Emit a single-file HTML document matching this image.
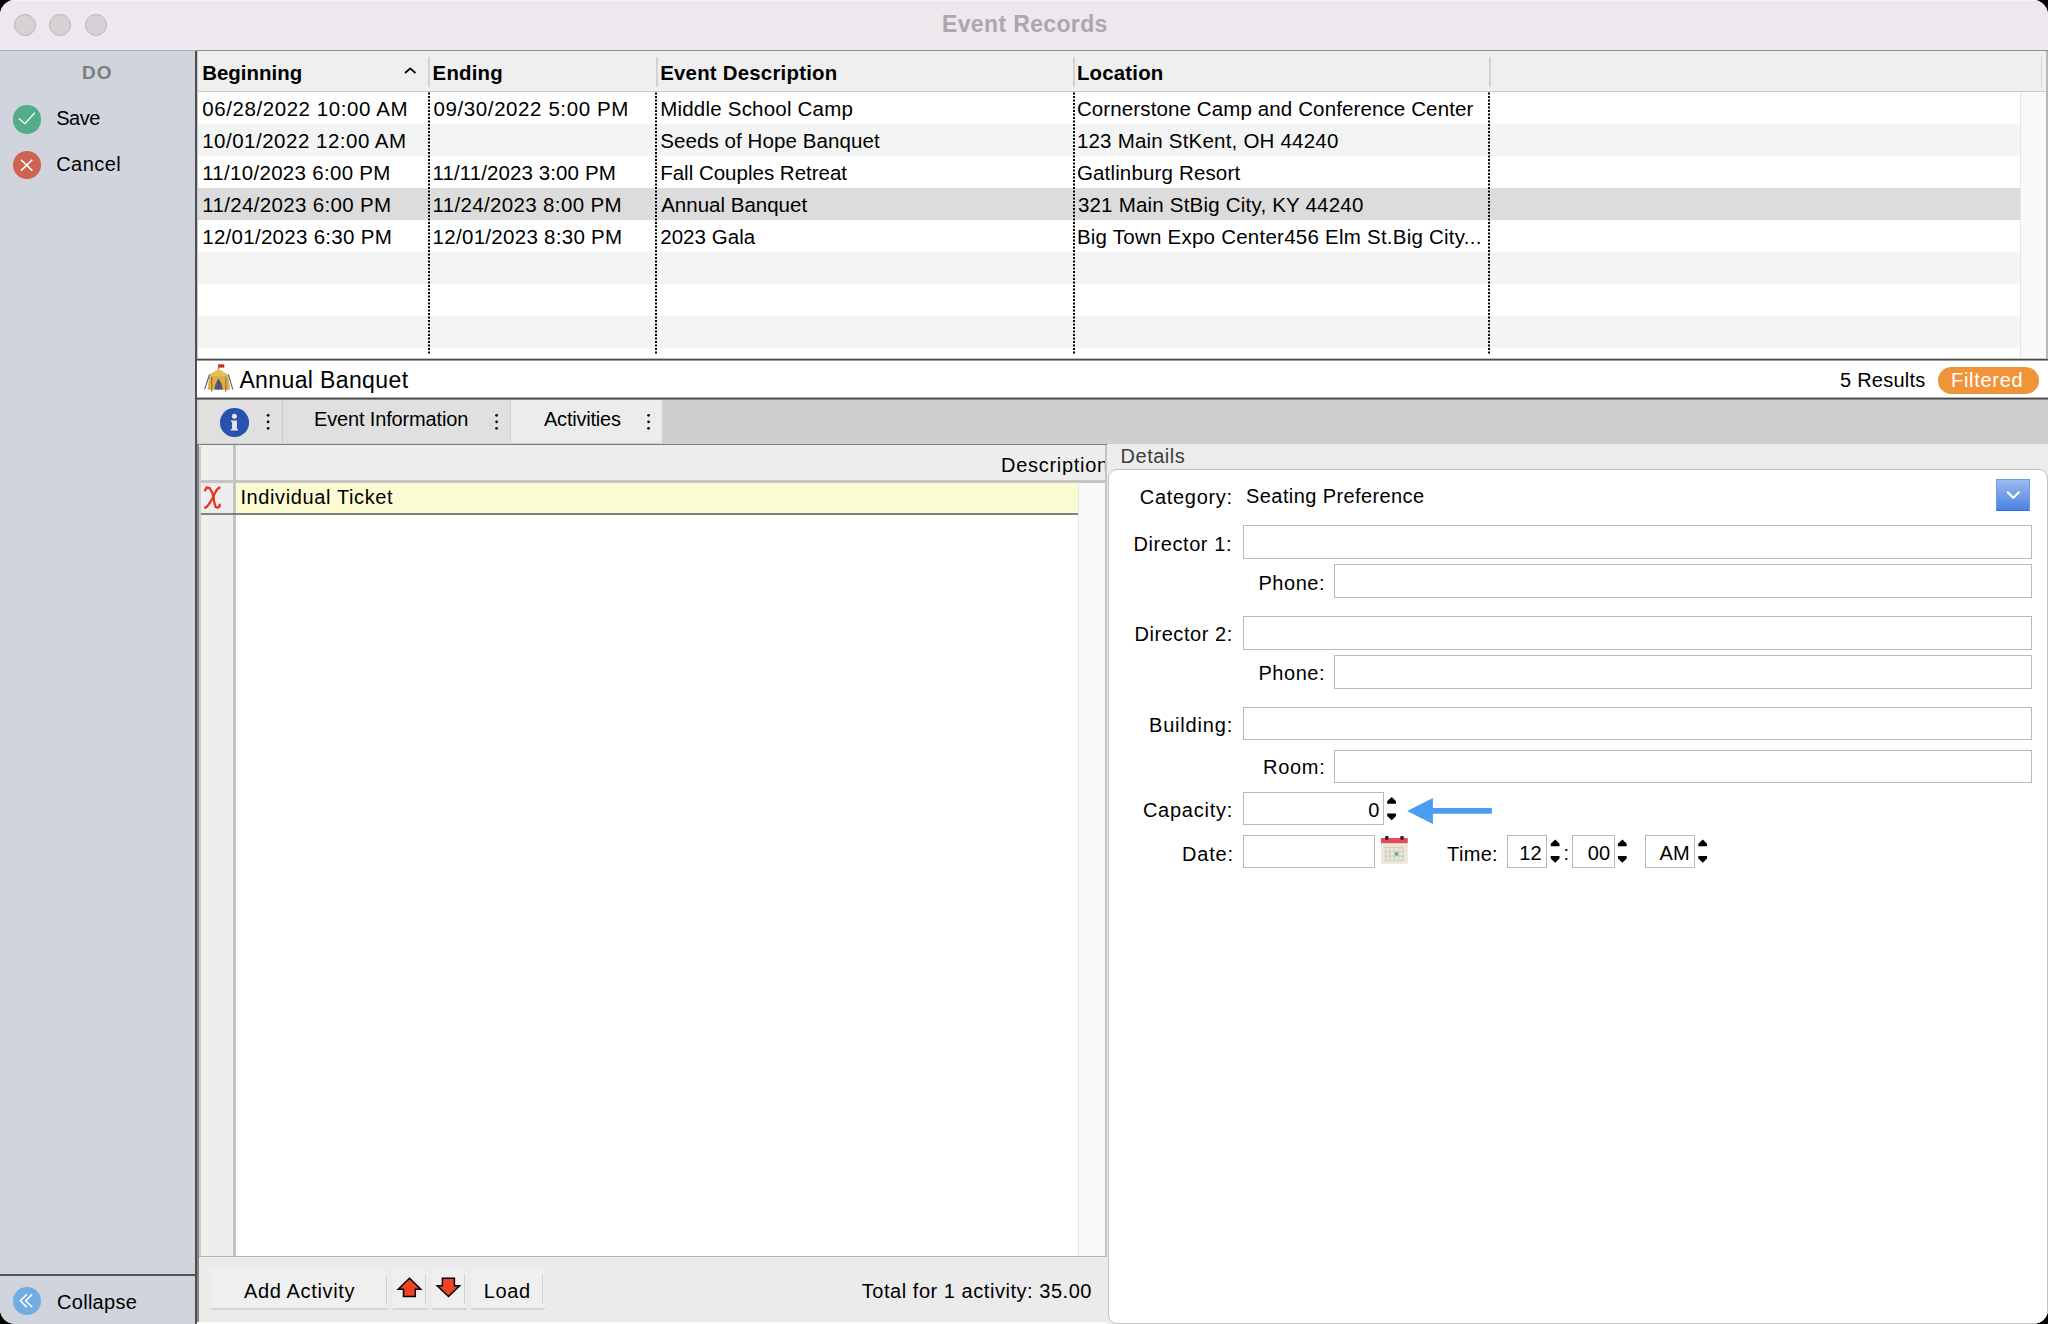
<!DOCTYPE html>
<html><head><meta charset="utf-8">
<style>
*{box-sizing:border-box;margin:0;padding:0}
html,body{width:2048px;height:1324px;overflow:hidden;background:#000}
body{font-family:"Liberation Sans",sans-serif;color:#000;-webkit-font-smoothing:antialiased}
#win{position:absolute;left:0;top:0;width:2048px;height:1324px;border-radius:15px;overflow:hidden;background:#fff}
.a{position:absolute}
.t{position:absolute;line-height:1;white-space:nowrap}
.tl{position:absolute;top:13.5px;width:22px;height:22px;border-radius:50%;background:#d5d1d5;border:1px solid #bab5ba}
.fld{position:absolute;background:#fff;border:1px solid #b9b9b9}

</style></head>
<body>
<div id="win">
<!-- title bar -->
<div class="a" style="left:0;top:0;width:2048px;height:50px;background:#ece8ed"></div>
<div class="a" style="left:0;top:0;width:2048px;height:1px;background:#f5f3f5"></div>
<div class="a" style="left:0;top:50px;width:196px;height:1px;background:#a9aeb7"></div>
<div class="a" style="left:196px;top:50px;width:1852px;height:1px;background:#8e8e8e"></div>
<div class="tl" style="left:14px"></div>
<div class="tl" style="left:49px"></div>
<div class="tl" style="left:85px"></div>
<!-- sidebar -->
<div class="a" style="left:0;top:51px;width:195px;height:1273px;background:#d0d4dd"></div>
<div class="a" style="left:195px;top:51px;width:2px;height:1273px;background:#4f4f4f"></div>
<div class="a" style="left:12.5px;top:105px;width:28.5px;height:28.5px;border-radius:50%;background:#56ab88"></div>
<div class="a" style="left:12.5px;top:150.7px;width:28.5px;height:28.5px;border-radius:50%;background:#cd6452"></div>
<div class="a" style="left:0;top:1274px;width:195px;height:2px;background:#555"></div>
<div class="a" style="left:12.5px;top:1286.5px;width:28.5px;height:28.5px;border-radius:50%;background:#70ade0"></div>
<!-- events table -->
<div class="a" style="left:197px;top:51px;width:1851px;height:309px;background:#fff"></div>
<div class="a" style="left:197px;top:51px;width:1px;height:308px;background:#c8c8c8"></div>
<div class="a" style="left:198px;top:51px;width:1848px;height:40px;background:#efefef"></div>
<div class="a" style="left:198px;top:91px;width:1848px;height:1px;background:#cccccc"></div>
<div class="a" style="left:428px;top:57px;width:2px;height:30px;background:#d4d4d4"></div>
<div class="a" style="left:655.5px;top:57px;width:2px;height:30px;background:#d4d4d4"></div>
<div class="a" style="left:1073px;top:57px;width:2px;height:30px;background:#d4d4d4"></div>
<div class="a" style="left:1488.5px;top:57px;width:2px;height:30px;background:#d4d4d4"></div>
<div class="a" style="left:2041px;top:57px;width:1px;height:30px;background:#d4d4d4"></div>
<div class="a" style="left:198px;top:92px;width:1822px;height:32px;background:#fff"></div>
<div class="a" style="left:198px;top:124px;width:1822px;height:32px;background:#f3f4f4"></div>
<div class="a" style="left:198px;top:156px;width:1822px;height:32px;background:#fff"></div>
<div class="a" style="left:198px;top:188px;width:1822px;height:32px;background:#dcdcdc"></div>
<div class="a" style="left:198px;top:220px;width:1822px;height:32px;background:#fff"></div>
<div class="a" style="left:198px;top:252px;width:1822px;height:32px;background:#f3f4f4"></div>
<div class="a" style="left:198px;top:284px;width:1822px;height:32px;background:#fff"></div>
<div class="a" style="left:198px;top:316px;width:1822px;height:32px;background:#f3f4f4"></div>
<div class="a" style="left:2020px;top:92px;width:26px;height:266px;background:#f9f9f9;border-left:1px solid #e4e4e4"></div>
<div class="a" style="left:2046px;top:51px;width:2px;height:307px;background:#b8b8b8"></div>
<div class="a" style="left:197px;top:358px;width:1851px;height:1px;background:#c0c0c0"></div>
<div class="a" style="left:197px;top:359px;width:1851px;height:1px;background:#484848"></div>
<div class="a" style="left:197px;top:360px;width:1851px;height:1px;background:#9a9a9a"></div>
<!-- record header -->
<div class="a" style="left:197px;top:361px;width:1851px;height:36px;background:#fff"></div>
<div class="a" style="left:197px;top:397px;width:1851px;height:1px;background:#b4b4b4"></div>
<div class="a" style="left:197px;top:398px;width:1851px;height:1px;background:#484848"></div>
<div class="a" style="left:197px;top:399px;width:1851px;height:1px;background:#8a8a8a"></div>
<div class="a" style="left:1938px;top:367.2px;width:101px;height:26.5px;border-radius:13.25px;background:#f0943a"></div>
<!-- tab bar -->
<div class="a" style="left:197px;top:400px;width:1851px;height:44px;background:#cfcfcf"></div>
<div class="a" style="left:197px;top:444px;width:910px;height:2px;background:#7c7c7c"></div>
<div class="a" style="left:199px;top:400px;width:83px;height:43px;background:#e0e0e0"></div>
<div class="a" style="left:282px;top:400px;width:1px;height:43px;background:#cbcbcb"></div>
<div class="a" style="left:283px;top:400px;width:227px;height:43px;background:#e0e0e0"></div>
<div class="a" style="left:510px;top:400px;width:1px;height:43px;background:#d2d2d2"></div>
<div class="a" style="left:511px;top:400px;width:151px;height:43px;background:#ececec"></div>
<div class="a" style="left:220px;top:408px;width:28.6px;height:28.6px;border-radius:50%;background:#2852ae"></div>
<!-- activities grid -->
<div class="a" style="left:197px;top:446px;width:910px;height:878px;background:#ebebeb"></div>
<div class="a" style="left:197px;top:446px;width:2px;height:876px;background:#858585"></div>
<div class="a" style="left:199px;top:445px;width:907px;height:812px;background:#fff"></div>
<div class="a" style="left:199px;top:446px;width:2px;height:811px;background:#cdcdcd"></div>
<div class="a" style="left:1105px;top:445px;width:2px;height:812px;background:#c4c4c4"></div>
<div class="a" style="left:199px;top:1256px;width:908px;height:1px;background:#b5b5b5"></div>
<div class="a" style="left:201px;top:445px;width:904px;height:35px;background:#eeeeee"></div>
<div class="a" style="left:201px;top:479.5px;width:904px;height:3px;background:#c4c4c4"></div>
<div class="a" style="left:201px;top:482.5px;width:32px;height:773.5px;background:#eeeeee"></div>
<div class="a" style="left:233px;top:445px;width:3px;height:811px;background:#c4c4c4"></div>
<div class="a" style="left:1078px;top:482.5px;width:27px;height:773.5px;background:#f9f9f9;border-left:1px solid #e6e6e6"></div>
<div class="a" style="left:236px;top:482.5px;width:842px;height:30px;background:#fcfcd2"></div>
<div class="a" style="left:201px;top:513px;width:877px;height:2px;background:#808080"></div>
<!-- footer buttons -->
<div class="a" style="left:211px;top:1269px;width:177px;height:38px;background:#efefef"></div>
<div class="a" style="left:211px;top:1308px;width:177px;height:2px;background:#d6d6d6"></div>
<div class="a" style="left:386px;top:1274px;width:1px;height:30px;background:#d2d2d2"></div>
<div class="a" style="left:393px;top:1269px;width:35px;height:38px;background:#efefef"></div>
<div class="a" style="left:393px;top:1308px;width:35px;height:2px;background:#d6d6d6"></div>
<div class="a" style="left:425px;top:1274px;width:1px;height:30px;background:#d2d2d2"></div>
<div class="a" style="left:432px;top:1269px;width:35px;height:38px;background:#efefef"></div>
<div class="a" style="left:432px;top:1308px;width:35px;height:2px;background:#d6d6d6"></div>
<div class="a" style="left:464px;top:1274px;width:1px;height:30px;background:#d2d2d2"></div>
<div class="a" style="left:470.5px;top:1269px;width:74px;height:38px;background:#efefef"></div>
<div class="a" style="left:470.5px;top:1308px;width:74px;height:2px;background:#d6d6d6"></div>
<div class="a" style="left:542px;top:1274px;width:1px;height:30px;background:#d2d2d2"></div>
<!-- details -->
<div class="a" style="left:1107px;top:444px;width:941px;height:880px;background:#ececec"></div>
<div class="a" style="left:1108px;top:468.5px;width:940px;height:855.5px;background:#fff;border:1px solid #c3c3c3;border-radius:9px"></div>
<div class="a" style="left:1996.3px;top:479px;width:33.7px;height:31.7px;background:linear-gradient(#9dbbef,#4a81e1);border:1px solid #6f9ae8;border-bottom-color:#2f68d8"></div>
<div class="fld" style="left:1243px;top:525px;width:789px;height:33.5px"></div>
<div class="fld" style="left:1334px;top:564px;width:698px;height:33.5px"></div>
<div class="fld" style="left:1243px;top:616px;width:789px;height:33.5px"></div>
<div class="fld" style="left:1334px;top:655px;width:698px;height:33.5px"></div>
<div class="fld" style="left:1243px;top:706.5px;width:789px;height:33.5px"></div>
<div class="fld" style="left:1334px;top:749.5px;width:698px;height:33.5px"></div>
<div class="fld" style="left:1243px;top:792px;width:141px;height:33px"></div>
<div class="fld" style="left:1243px;top:834.5px;width:132px;height:33.5px"></div>
<div class="fld" style="left:1506.5px;top:834.5px;width:40.5px;height:33.5px"></div>
<div class="fld" style="left:1572px;top:834.5px;width:42.5px;height:33.5px"></div>
<div class="fld" style="left:1645px;top:834.5px;width:49.5px;height:33.5px"></div>
<div class="a" style="left:197px;top:1322px;width:910px;height:2px;background:#fff"></div>

<svg class="a" style="left:0;top:0" width="2048" height="1324" viewBox="0 0 2048 1324">
    <!-- dotted col lines -->
    <g stroke="#000" stroke-width="2" stroke-dasharray="2,1.5">
      <line x1="429" y1="92.5" x2="429" y2="354.2"/>
      <line x1="656" y1="92.5" x2="656" y2="354.2"/>
      <line x1="1074" y1="92.5" x2="1074" y2="354.2"/>
      <line x1="1489" y1="92.5" x2="1489" y2="354.2"/>
    </g>
    <!-- save check -->
    <path d="M18.8,118.6 L24.9,123.7 L34.8,112.8" fill="none" stroke="#fff" stroke-width="1.3"/>
    <!-- cancel x -->
    <path d="M21,159.7 L32.3,170.6 M32.3,159.7 L21,170.6" fill="none" stroke="#fff" stroke-width="1.5"/>
    <!-- collapse chevrons -->
    <path d="M26.8,1294.4 L20.4,1300.7 L26.8,1307.1 M32.1,1294.4 L25.7,1300.7 L32.1,1307.1" fill="none" stroke="#fff" stroke-width="1.5"/>
    <!-- sort caret -->
    <path d="M405,73 L410.3,68.3 L415.5,73" fill="none" stroke="#000" stroke-width="1.7"/>
    <!-- tent -->
    <line x1="218.5" y1="364.2" x2="218.5" y2="369.5" stroke="#6b7280" stroke-width="1.2"/>
    <rect x="219" y="364.3" width="5.3" height="3.3" fill="#d42a1e"/>
    <path d="M218.5,369 L209.6,374.5 L207.7,389.6 L230,389.6 L227.9,374.5 Z" fill="#e9bd49"/>
    <path d="M207.7,389.6 L209.4,378 L228.4,378 L230,389.6 Z" fill="#e7ad37"/>
    <rect x="211" y="376.3" width="15.5" height="1.4" fill="#c0aa82"/>
    <line x1="211.7" y1="377" x2="211.7" y2="391.5" stroke="#7d7a72" stroke-width="1.3"/>
    <line x1="225.8" y1="377" x2="225.8" y2="391.5" stroke="#7d7a72" stroke-width="1.3"/>
    <path d="M218.5,378.3 Q214.8,383.5 214.3,389.6 L222.9,389.6 Q222.3,383.5 218.5,378.3 Z" fill="#4f5a86"/><line x1="218.6" y1="381" x2="218.6" y2="389.6" stroke="#3b4468" stroke-width="0.9"/>
    <line x1="209.6" y1="374.5" x2="204.6" y2="389.3" stroke="#525c88" stroke-width="1.1"/>
    <line x1="228.3" y1="374.5" x2="232.8" y2="389.5" stroke="#525c88" stroke-width="1.1"/>
    <!-- info i -->
    <circle cx="234.4" cy="416.3" r="2.5" fill="#e6e6e6"/>
    <path d="M231,420.4 L236.9,420.4 L236.9,429 L237.9,429 L237.9,430.5 L230.7,430.5 L230.7,429 L232.1,429 L232.1,422 L231,422 Z" fill="#e6e6e6"/>
    <!-- tab dots -->
    <circle cx="268.1" cy="415.3" r="1.35"/><circle cx="268.1" cy="421.8" r="1.35"/><circle cx="268.1" cy="428.3" r="1.35"/>
    <circle cx="496.6" cy="415.3" r="1.35"/><circle cx="496.6" cy="421.8" r="1.35"/><circle cx="496.6" cy="428.3" r="1.35"/>
    <circle cx="648.6" cy="415.3" r="1.35"/><circle cx="648.6" cy="421.8" r="1.35"/><circle cx="648.6" cy="428.3" r="1.35"/>
    <!-- red x -->
    <path d="M204.6,491.2 L206.6,487.6 L209.6,488 L212.2,492.6 L213.6,497.5 L214.2,502 L215.6,506.8 L217.6,507.7 L219.6,506.4 L219.7,503.8" fill="none" stroke="#e8331d" stroke-width="2.3"/>
    <path d="M220.2,487 L217.2,489.2 L214.6,493.6 L212.2,499 L209.6,503.2 L207,506.6 L204.3,508.2" fill="none" stroke="#e8331d" stroke-width="2.3"/>
    <!-- up / down arrows -->
    <path d="M409.5,1278.3 L398.2,1289.3 L403.5,1289.3 L403.5,1296.5 L415.3,1296.5 L415.3,1289.3 L420.8,1289.3 Z" fill="#ee4422" stroke="#000" stroke-width="1.5" stroke-linejoin="miter"/>
    <path d="M442.4,1278.3 L454.4,1278.3 L454.4,1285.8 L459.6,1285.8 L448.5,1296.5 L437.2,1285.8 L442.4,1285.8 Z" fill="#ee4422" stroke="#000" stroke-width="1.5" stroke-linejoin="miter"/>
    <!-- dropdown chevron -->
    <path d="M2007.9,492.5 L2013.3,497.8 L2018.7,492.5" fill="none" stroke="#fff" stroke-width="2.3" stroke-linecap="round" stroke-linejoin="round"/>
    <!-- steppers -->
    <g fill="#000">
      <path d="M1391.7,797 L1396,801.3 L1396,803.7 L1387.2,803.7 L1387.2,801.3 Z"/>
      <path d="M1387.2,813.4 L1396,813.4 L1396,815.9 L1391.7,820.3 L1387.2,815.9 Z"/>
      <path d="M1555.2,839.5 L1559.5,843.8 L1559.5,846.2 L1550.7,846.2 L1550.7,843.8 Z"/>
      <path d="M1550.7,855.9 L1559.5,855.9 L1559.5,858.4 L1555.2,862.8 L1550.7,858.4 Z"/>
      <path d="M1622.4,839.5 L1626.7,843.8 L1626.7,846.2 L1617.9,846.2 L1617.9,843.8 Z"/>
      <path d="M1617.9,855.9 L1626.7,855.9 L1626.7,858.4 L1622.4,862.8 L1617.9,858.4 Z"/>
      <path d="M1702.8,839.5 L1707.1,843.8 L1707.1,846.2 L1698.3,846.2 L1698.3,843.8 Z"/>
      <path d="M1698.3,855.9 L1707.1,855.9 L1707.1,858.4 L1702.8,862.8 L1698.3,858.4 Z"/>
    </g>
    <!-- blue arrow -->
    <path d="M1407.1,811 L1432.9,797.9 L1432.9,808.1 L1491.9,808.1 L1491.9,813.8 L1432.9,813.8 L1432.9,824 Z" fill="#4a9df0"/>
    <!-- calendar -->
    <rect x="1381" y="843" width="26.8" height="20.8" fill="#e9e8d8"/>
    <rect x="1381" y="838" width="26.8" height="5.2" fill="#e84857"/>
    <rect x="1385.1" y="836" width="3.5" height="3.8" rx="0.8" fill="#1a2a40"/>
    <rect x="1400.3" y="836" width="3.5" height="3.8" rx="0.8" fill="#1a2a40"/>
    <g stroke="#d2cdb9" stroke-width="1.1" fill="none">
      <rect x="1385.5" y="847.3" width="17.6" height="13.3"/>
      <path d="M1389.9,847.3 V860.6 M1394.3,847.3 V860.6 M1398.7,847.3 V860.6 M1385.5,851.7 H1403.1 M1385.5,856.1 H1403.1"/>
    </g>
    <rect x="1394.8" y="852.2" width="3.4" height="3.4" fill="#50b898"/>
  </svg>
<div class="t" id="title" style="left:942.00px;top:13.00px;font-size:23px;font-weight:bold;letter-spacing:0.36px;color:#aca7ac;">Event Records</div>
<div class="t" id="do" style="left:82.00px;top:63.00px;font-size:19px;font-weight:bold;letter-spacing:1.0px;color:#7c7c7c;">DO</div>
<div class="t" id="save" style="left:56.20px;top:108.00px;font-size:20px;font-weight:normal;letter-spacing:-0.43px;color:#000;">Save</div>
<div class="t" id="cancel" style="left:56.20px;top:154.00px;font-size:20px;font-weight:normal;letter-spacing:0.44px;color:#000;">Cancel</div>
<div class="t" id="collapse" style="left:57.00px;top:1292.00px;font-size:20px;font-weight:normal;letter-spacing:0.29px;color:#000;">Collapse</div>
<div class="t" id="h1" style="left:202.20px;top:63.00px;font-size:20.4px;font-weight:bold;letter-spacing:0.05px;color:#000;">Beginning</div>
<div class="t" id="h2" style="left:432.60px;top:63.00px;font-size:20.4px;font-weight:bold;letter-spacing:0.2px;color:#000;">Ending</div>
<div class="t" id="h3" style="left:660.20px;top:63.00px;font-size:20.4px;font-weight:bold;letter-spacing:0.23px;color:#000;">Event Description</div>
<div class="t" id="h4" style="left:1076.90px;top:63.00px;font-size:20.4px;font-weight:bold;letter-spacing:0.2px;color:#000;">Location</div>
<div class="t" id="r0c0" style="left:202.20px;top:99.00px;font-size:20.5px;font-weight:normal;letter-spacing:0.58px;color:#000;">06/28/2022 10:00 AM</div>
<div class="t" id="r0c1" style="left:433.60px;top:99.00px;font-size:20.5px;font-weight:normal;letter-spacing:0.59px;color:#000;">09/30/2022 5:00 PM</div>
<div class="t" id="r0c2" style="left:660.20px;top:99.00px;font-size:20.5px;font-weight:normal;letter-spacing:0.21px;color:#000;">Middle School Camp</div>
<div class="t" id="r0c3" style="left:1076.90px;top:99.00px;font-size:20.5px;font-weight:normal;letter-spacing:0.12px;color:#000;">Cornerstone Camp and Conference Center</div>
<div class="t" id="r1c0" style="left:202.20px;top:131.00px;font-size:20.5px;font-weight:normal;letter-spacing:0.5px;color:#000;">10/01/2022 12:00 AM</div>
<div class="t" id="r1c2" style="left:660.20px;top:131.00px;font-size:20.5px;font-weight:normal;letter-spacing:0.09px;color:#000;">Seeds of Hope Banquet</div>
<div class="t" id="r1c3" style="left:1076.90px;top:131.00px;font-size:20.5px;font-weight:normal;letter-spacing:0.21px;color:#000;">123 Main StKent, OH 44240</div>
<div class="t" id="r2c0" style="left:202.20px;top:163.00px;font-size:20.5px;font-weight:normal;letter-spacing:0.3px;color:#000;">11/10/2023 6:00 PM</div>
<div class="t" id="r2c1" style="left:432.60px;top:163.00px;font-size:20.5px;font-weight:normal;letter-spacing:0.09px;color:#000;">11/11/2023 3:00 PM</div>
<div class="t" id="r2c2" style="left:660.20px;top:163.00px;font-size:20.5px;font-weight:normal;letter-spacing:0.0px;color:#000;">Fall Couples Retreat</div>
<div class="t" id="r2c3" style="left:1076.90px;top:163.00px;font-size:20.5px;font-weight:normal;letter-spacing:0.16px;color:#000;">Gatlinburg Resort</div>
<div class="t" id="r3c0" style="left:202.20px;top:195.00px;font-size:20.5px;font-weight:normal;letter-spacing:0.34px;color:#000;">11/24/2023 6:00 PM</div>
<div class="t" id="r3c1" style="left:432.60px;top:195.00px;font-size:20.5px;font-weight:normal;letter-spacing:0.34px;color:#000;">11/24/2023 8:00 PM</div>
<div class="t" id="r3c2" style="left:661.20px;top:195.00px;font-size:20.5px;font-weight:normal;letter-spacing:0.0px;color:#000;">Annual Banquet</div>
<div class="t" id="r3c3" style="left:1077.90px;top:195.00px;font-size:20.5px;font-weight:normal;letter-spacing:0.21px;color:#000;">321 Main StBig City, KY 44240</div>
<div class="t" id="r4c0" style="left:202.20px;top:227.00px;font-size:20.5px;font-weight:normal;letter-spacing:0.29px;color:#000;">12/01/2023 6:30 PM</div>
<div class="t" id="r4c1" style="left:432.60px;top:227.00px;font-size:20.5px;font-weight:normal;letter-spacing:0.29px;color:#000;">12/01/2023 8:30 PM</div>
<div class="t" id="r4c2" style="left:660.20px;top:227.00px;font-size:20.5px;font-weight:normal;letter-spacing:0.05px;color:#000;">2023 Gala</div>
<div class="t" id="r4c3" style="left:1076.90px;top:227.00px;font-size:20.5px;font-weight:normal;letter-spacing:0.24px;color:#000;">Big Town Expo Center456 Elm St.Big City...</div>
<div class="t" id="rech" style="left:239.40px;top:369.00px;font-size:23px;font-weight:normal;letter-spacing:0.38px;color:#000;">Annual Banquet</div>
<div class="t" id="results" style="left:1840.00px;top:370.00px;font-size:20px;font-weight:normal;letter-spacing:0.25px;color:#000;">5 Results</div>
<div class="t" id="filtered" style="left:1951.00px;top:370.00px;font-size:20px;font-weight:normal;letter-spacing:0.7px;color:#fff;">Filtered</div>
<div class="t" id="tab2" style="left:314.00px;top:409.00px;font-size:20px;font-weight:normal;letter-spacing:-0.15px;color:#000;">Event Information</div>
<div class="t" id="tab3" style="left:544.00px;top:409.00px;font-size:20px;font-weight:normal;letter-spacing:-0.22px;color:#000;">Activities</div>
<div class="t" id="desc" style="left:1001.00px;top:455.00px;font-size:20px;font-weight:normal;letter-spacing:0.72px;color:#000;width:104px;overflow:hidden">Description</div>
<div class="t" id="details" style="left:1120.50px;top:446.00px;font-size:20px;font-weight:normal;letter-spacing:0.53px;color:#3c3c3c;">Details</div>
<div class="t" id="indiv" style="left:240.40px;top:487.00px;font-size:20px;font-weight:normal;letter-spacing:0.62px;color:#000;">Individual Ticket</div>
<div class="t" id="addact" style="left:244.00px;top:1281.00px;font-size:20px;font-weight:normal;letter-spacing:0.64px;color:#000;">Add Activity</div>
<div class="t" id="load" style="left:483.80px;top:1281.00px;font-size:20px;font-weight:normal;letter-spacing:0.6px;color:#000;">Load</div>
<div class="t" id="total" style="right:956.00px;top:1281.00px;font-size:20px;font-weight:normal;letter-spacing:0.54px;color:#000;">Total for 1 activity: 35.00</div>
<div class="t" id="cat" style="right:815.20px;top:487.00px;font-size:20px;font-weight:normal;letter-spacing:0.7px;color:#000;">Category:</div>
<div class="t" id="seat" style="left:1246.10px;top:486.00px;font-size:20px;font-weight:normal;letter-spacing:0.4px;color:#000;">Seating Preference</div>
<div class="t" id="dir1" style="right:816.00px;top:534.00px;font-size:20px;font-weight:normal;letter-spacing:0.56px;color:#000;">Director 1:</div>
<div class="t" id="ph1" style="right:722.90px;top:573.00px;font-size:20px;font-weight:normal;letter-spacing:0.54px;color:#000;">Phone:</div>
<div class="t" id="dir2" style="right:815.20px;top:624.00px;font-size:20px;font-weight:normal;letter-spacing:0.56px;color:#000;">Director 2:</div>
<div class="t" id="ph2" style="right:722.90px;top:663.00px;font-size:20px;font-weight:normal;letter-spacing:0.54px;color:#000;">Phone:</div>
<div class="t" id="bld" style="right:815.00px;top:715.00px;font-size:20px;font-weight:normal;letter-spacing:0.81px;color:#000;">Building:</div>
<div class="t" id="room" style="right:722.60px;top:757.00px;font-size:20px;font-weight:normal;letter-spacing:0.7px;color:#000;">Room:</div>
<div class="t" id="cap" style="right:815.00px;top:800.00px;font-size:20px;font-weight:normal;letter-spacing:0.75px;color:#000;">Capacity:</div>
<div class="t" id="cap0" style="right:668.60px;top:800.00px;font-size:20px;font-weight:normal;letter-spacing:0px;color:#000;">0</div>
<div class="t" id="date" style="right:814.00px;top:844.00px;font-size:20px;font-weight:normal;letter-spacing:0.85px;color:#000;">Date:</div>
<div class="t" id="time" style="right:550.00px;top:844.00px;font-size:20px;font-weight:normal;letter-spacing:0.33px;color:#000;">Time:</div>
<div class="t" id="hh" style="right:506.00px;top:843.00px;font-size:20px;font-weight:normal;letter-spacing:0.3px;color:#000;">12</div>
<div class="t" id="colon" style="right:479.00px;top:843.00px;font-size:20px;font-weight:normal;letter-spacing:0px;color:#000;">:</div>
<div class="t" id="mm" style="right:437.50px;top:843.00px;font-size:20px;font-weight:normal;letter-spacing:0.3px;color:#000;">00</div>
<div class="t" id="ampm" style="right:358.00px;top:843.00px;font-size:20px;font-weight:normal;letter-spacing:0.3px;color:#000;">AM</div>
</div>
</body></html>
